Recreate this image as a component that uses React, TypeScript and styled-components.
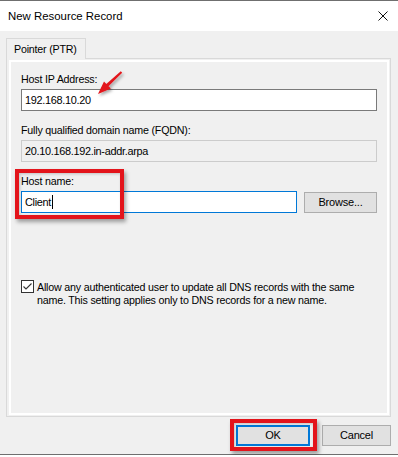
import React from "react";
import styled, { createGlobalStyle } from "styled-components";

const GlobalStyle = createGlobalStyle`
  html, body { margin: 0; padding: 0; background: #ffffff; }
  body {
    font-family: "Liberation Sans", Arial, sans-serif;
    font-size: 10.7px;
    letter-spacing: -0.2px;
    color: #000;
  }
  * { box-sizing: border-box; }
`;

const RED = "#e3141b";

const Window = styled.div`
  width: 398px;
  height: 455px;
  display: flex;
  flex-direction: column;
  background: #f0f0f0;
  border-top: 1px solid #6f6f6f;
  border-bottom: 1px solid #6f6f6f;
`;

const TitleBar = styled.div`
  height: 30px;
  flex: none;
  background: #ffffff;
  display: flex;
  align-items: center;
  justify-content: space-between;
  padding: 0 10px 0 8px;
  line-height: 30px;
  font-size: 11.4px;
  letter-spacing: 0;
`;

const CloseIcon = styled.svg`
  width: 10px;
  height: 10px;
  margin-top: -1px;
`;

const Body = styled.div`
  flex: 1;
  display: flex;
  flex-direction: column;
  padding: 7px 7px 0 6px;
`;

const TabStrip = styled.div`
  display: flex;
  height: 20px;
  position: relative;
  z-index: 1;
`;

const Tab = styled.div`
  width: 80px;
  height: 21px;
  padding: 3px 0 0 7px;
  line-height: 14px;
  background: #f0f0f0;
  border: 1px solid #d9d9d9;
  border-bottom: none;
  white-space: nowrap;
`;

const Panel = styled.div`
  height: 359px;
  border: 1px solid #d9d9d9;
  padding: 1px 1px 1px 2px;
`;

const PanelInner = styled.div`
  height: 100%;
  border: 2px solid #ffffff;
  padding: 9px 10px 0 10px;
  display: flex;
  flex-direction: column;
`;

const Form = styled.div`
  display: flex;
  flex-direction: column;
  gap: 11px;
`;

const Field = styled.div`
  position: relative;
  display: flex;
  flex-direction: column;
`;

const Label = styled.div`
  line-height: 14px;
  margin-bottom: 3px;
  padding-top: 1px;
  white-space: nowrap;
`;

type BoxVariant = "normal" | "disabled" | "focused";

const TextBox = styled.div<{ $variant: BoxVariant }>`
  height: 22px;
  flex: 1;
  padding: 0 3px;
  line-height: 20px;
  white-space: nowrap;
  display: flex;
  align-items: center;
  font-size: 10.9px;
  letter-spacing: -0.3px;
  border: 1px solid
    ${(p) =>
      p.$variant === "focused" ? "#0078d7" : p.$variant === "disabled" ? "#cccccc" : "#7a7a7a"};
  background: ${(p) => (p.$variant === "disabled" ? "#f0f0f0" : "#ffffff")};
`;

const Caret = styled.span`
  display: inline-block;
  width: 1px;
  height: 14px;
  background: #000;
  margin-left: 1px;
`;

const Row = styled.div`
  display: flex;
  align-items: center;
  gap: 7px;
`;

const Button = styled.button<{ $width: number; $default?: boolean }>`
  width: ${(p) => p.$width}px;
  height: 21px;
  flex: none;
  padding: 0;
  margin: 0;
  font-family: "Liberation Sans", Arial, sans-serif;
  font-size: 11px;
  letter-spacing: -0.2px;
  color: #000;
  background: #e1e1e1;
  border: ${(p) => (p.$default ? "2px solid #0078d7" : "1px solid #adadad")};
  line-height: 17px;
`;

const Highlight = styled.div<{ $top: number; $left: number; $w: number; $h: number }>`
  position: absolute;
  top: ${(p) => p.$top}px;
  left: ${(p) => p.$left}px;
  width: ${(p) => p.$w}px;
  height: ${(p) => p.$h}px;
  border: 4px solid ${RED};
  box-shadow: 2px 3px 4px rgba(0, 0, 0, 0.35), inset 1px 1px 3px rgba(0, 0, 0, 0.2);
  pointer-events: none;
`;

const HighlightWrap = styled.div`
  position: relative;
  display: flex;
`;

const Arrow = styled.svg`
  position: absolute;
  left: 72px;
  top: -4px;
  width: 32px;
  height: 32px;
  overflow: visible;
  pointer-events: none;
`;

const CheckRow = styled.div`
  display: flex;
  align-items: flex-start;
  gap: 3px;
  margin-top: 67px;
`;

const CheckBox = styled.div`
  width: 13px;
  height: 13px;
  flex: none;
  border: 1px solid #333333;
  background: #ffffff;
  display: flex;
  align-items: center;
  justify-content: center;
`;

const CheckText = styled.div`
  line-height: 12.5px;
  white-space: nowrap;
  padding-top: 1px;
`;

const Footer = styled.div`
  display: flex;
  justify-content: flex-end;
  gap: 12px;
  padding-top: 8px;
`;

export default function App() {
  return (
    <>
      <GlobalStyle />
      <Window>
        <TitleBar>
          <span>New Resource Record</span>
          <CloseIcon viewBox="0 0 10 10">
            <path d="M0.5 0.5 L9.5 9.5 M9.5 0.5 L0.5 9.5" stroke="#111" strokeWidth="1" fill="none" />
          </CloseIcon>
        </TitleBar>
        <Body>
          <TabStrip>
            <Tab>Pointer (PTR)</Tab>
          </TabStrip>
          <Panel>
            <PanelInner>
              <Form>
                <Field>
                  <Label>Host IP Address:</Label>
                  <TextBox $variant="normal">192.168.10.20</TextBox>
                  <Arrow viewBox="0 0 32 32">
                    <defs>
                      <filter id="arrowShadow" x="-50%" y="-50%" width="200%" height="200%">
                        <feDropShadow dx="1.5" dy="2" stdDeviation="1.5" floodColor="#000" floodOpacity="0.35" />
                      </filter>
                    </defs>
                    <polygon
                      points="5,27 17.9,21.6 15.5,19.2 29.2,5.7 27.8,4.3 13.3,16.9 11,14.4"
                      fill={RED}
                      filter="url(#arrowShadow)"
                    />
                  </Arrow>
                </Field>
                <Field>
                  <Label>Fully qualified domain name (FQDN):</Label>
                  <TextBox $variant="disabled">20.10.168.192.in-addr.arpa</TextBox>
                </Field>
                <Field>
                  <Label>Host name:</Label>
                  <Row>
                    <TextBox $variant="focused">
                      Client
                      <Caret />
                    </TextBox>
                    <Button $width={73}>Browse...</Button>
                  </Row>
                  <Highlight $top={-4} $left={-6} $w={109} $h={50} />
                </Field>
              </Form>
              <CheckRow>
                <CheckBox>
                  <svg width="11" height="11" viewBox="0 0 11 11">
                    <polyline points="1.5,5.5 4,8 9.5,2.5" fill="none" stroke="#333" strokeWidth="1.1" />
                  </svg>
                </CheckBox>
                <CheckText>
                  Allow any authenticated user to update all DNS records with the same
                  <br />
                  name. This setting applies only to DNS records for a new name.
                </CheckText>
              </CheckRow>
            </PanelInner>
          </Panel>
          <Footer>
            <HighlightWrap>
              <Button $width={74} $default>
                OK
              </Button>
              <Highlight $top={-6} $left={-6} $w={87} $h={32} />
            </HighlightWrap>
            <Button $width={69}>Cancel</Button>
          </Footer>
        </Body>
      </Window>
    </>
  );
}
